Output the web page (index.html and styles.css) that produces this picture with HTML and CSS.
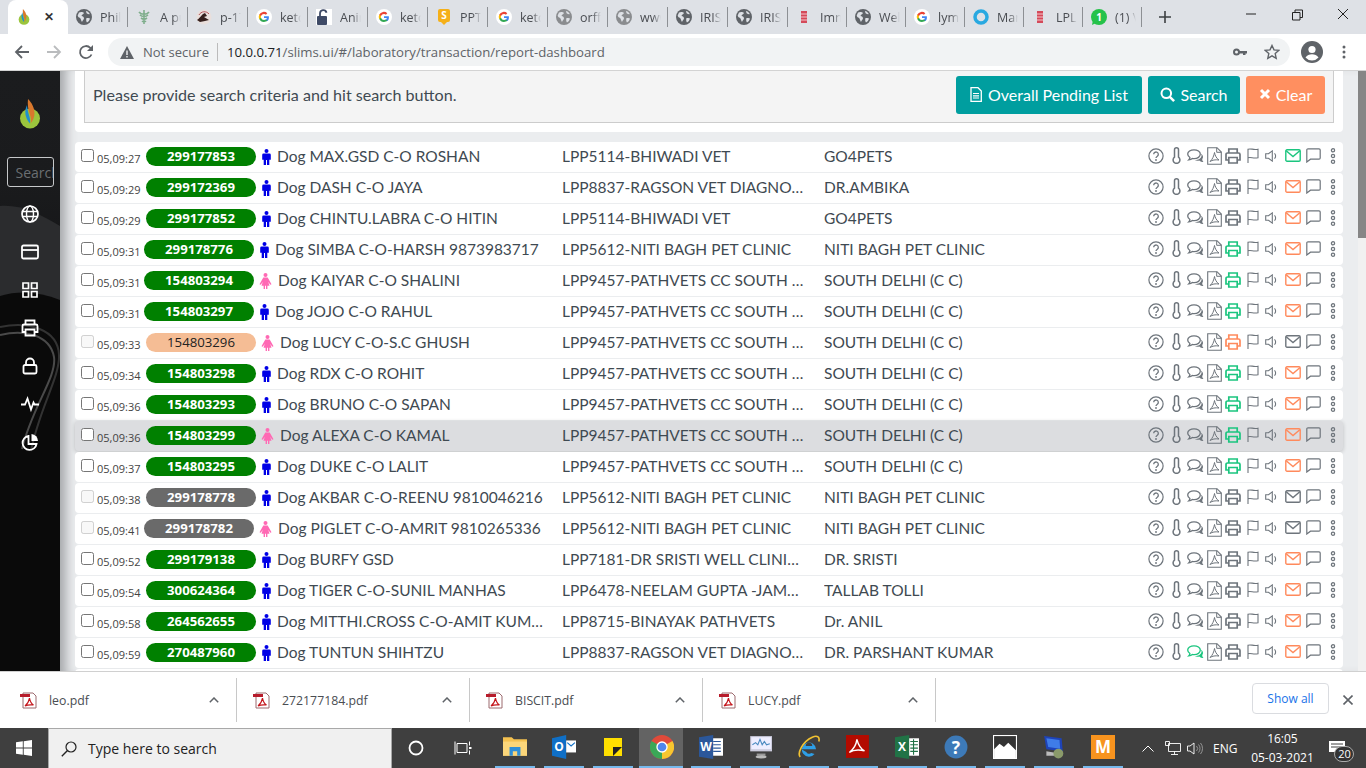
FILE: index.html
```html
<!DOCTYPE html>
<html lang="en">
<head>
<meta charset="utf-8">
<title>Report dashboard</title>
<link rel="stylesheet" href="styles.css">
</head>
<body>
<svg class="defs" aria-hidden="true">
  <symbol id="q" viewBox="0 0 16 16"><circle cx="8" cy="8" r="7.1" fill="none" stroke="currentColor" stroke-width="1.2"/><path d="M5.7 6.3a2.3 2.3 0 1 1 3.6 1.9c-.9.6-1.3 1-1.3 1.9" fill="none" stroke="currentColor" stroke-width="1.3"/><circle cx="8" cy="12" r=".9" fill="currentColor"/></symbol>
  <symbol id="t" viewBox="0 0 9 17"><path d="M2.5 10.2V2.8a2 2 0 0 1 4 0v7.4a3.4 3.4 0 1 1-4 0z" fill="none" stroke="currentColor" stroke-width="1.5"/></symbol>
  <symbol id="c" viewBox="0 0 17 14"><path d="M13.800 4.500c2.200 1.500 3 3.500 1.500 5.500-.2 1 .2 1.900 1.200 3-1.700 0-3-.5-4.200-1.500-1.700.4-3.200.2-4.500-.4 3.500 0 6.500-1.700 6.800-4.600z" fill="currentColor"/><path d="M7 .8C3.500.8.7 2.700.7 5.100c0 1.400.9 2.600 2.200 3.400-.1.900-.5 1.700-1.200 2.400 1.500-.1 2.800-.6 3.700-1.400.6.100 1.100.2 1.700.2 3.500 0 6.200-2 6.200-4.600S10.500.8 7 .8z" fill="none" stroke="currentColor" stroke-width="1.300"/></symbol>
  <symbol id="p" viewBox="0 0 15 18"><path d="M.7.700h9.300l4.300 4.300v12.300H.7z" fill="none" stroke="currentColor" stroke-width="1.100"/><path d="M9.700.700V5.300h4.600M7.500 5.500c-.5 3 -2 7-4.500 9 2.500-1.500 5-2 9-1.500-2.500-1.500-4-4.500-4.500-7.500z" fill="none" stroke="currentColor" stroke-width="1"/></symbol>
  <symbol id="pr" viewBox="0 0 16 16"><path d="M3.800 5V1h8.400v4M3.800 12H1V6.500A1.500 1.500 0 0 1 2.500 5h11A1.500 1.500 0 0 1 15 6.500V12h-2.800M3.800 9.500h8.400V15H3.800z" fill="none" stroke="currentColor" stroke-width="1.700"/></symbol>
  <symbol id="f" viewBox="0 0 12 15"><path d="M1 15V1.200c3.200-1 5 1 10 0v8.600c-5 1-6.800-1-10 0" fill="none" stroke="currentColor" stroke-width="1.100"/></symbol>
  <symbol id="v" viewBox="0 0 13 12"><path d="M.7 3.800h2.800L7.300.9v10.200L3.500 8.200H.7z" fill="none" stroke="currentColor" stroke-width="1.100"/><path d="M9.500 3.300a3.800 3.800 0 0 1 0 5.400" fill="none" stroke="currentColor" stroke-width="1.100"/></symbol>
  <symbol id="m" viewBox="0 0 16 13"><rect x=".8" y=".8" width="14.400" height="11.400" rx="1.200" fill="none" stroke="currentColor" stroke-width="1.400"/><path d="M1.200 1.800 8 7.500l6.800-5.700" fill="none" stroke="currentColor" stroke-width="1.400"/></symbol>
  <symbol id="ch" viewBox="0 0 15 15"><path d="M2 .8h11A1.200 1.200 0 0 1 14.200 2v8a1.200 1.200 0 0 1-1.200 1.200H4.500L.8 14V2A1.200 1.200 0 0 1 2 .8z" fill="none" stroke="currentColor" stroke-width="1.200"/></symbol>
  <symbol id="d" viewBox="0 0 6 16"><circle cx="3" cy="2.300" r="1.600" fill="none" stroke="currentColor" stroke-width="1.300"/><circle cx="3" cy="8" r="1.600" fill="none" stroke="currentColor" stroke-width="1.300"/><circle cx="3" cy="13.700" r="1.600" fill="none" stroke="currentColor" stroke-width="1.300"/></symbol>
  <symbol id="male" viewBox="0 0 11 16"><circle cx="5.500" cy="2" r="2"/><path d="M2.500 4.600h6a1.300 1.300 0 0 1 1.300 1.300v4.800H8.300V16H6V11H5v5H2.700v-5.300H1.200V5.900a1.300 1.300 0 0 1 1.300-1.300z"/></symbol>
  <symbol id="female" viewBox="0 0 13 16"><circle cx="6.500" cy="2" r="2"/><path d="M4.300 4.600h4.400l3.800 6.600-1.300.6-2-3 1.300 4H8.400V16H7v-3.200H6V16H4.600v-3.200H2.500l1.300-4-2 3-1.300-.6z"/></symbol>
  <symbol id="globe" viewBox="0 0 16 16"><circle cx="8" cy="8" r="8" fill="currentColor"/><path d="M3 3.500c2-1 4-.5 5 .5-1 1.500-2 1.500-2.500 3 1.500 0 2.500 1 2.500 2.500-.5 1.500-1.500 2-2 3.500-1-1.500-1-3-2-4-1-.5-2-1-2.300-2.500zM10 2c1.500 0 3 1.500 3.800 3-1 .5-2.800 0-3.300-1zM10.500 9c1 0 2.500 0 3.500.5-.5 2-1.500 3-3 4-1-1.500-1-3 -.5-4.500z" fill="#dee1e6"/></symbol>
  <symbol id="g" viewBox="0 0 16 16"><circle cx="8" cy="8" r="8" fill="#fff"/><path d="M12.900 8.200c0-.4 0-.7-.1-1H8v1.900h2.800a2.400 2.400 0 0 1-1 1.600v1.300h1.700c1-.9 1.400-2.200 1.400-3.800z" fill="#4285f4"/><path d="M8 13c1.400 0 2.500-.5 3.400-1.200l-1.600-1.300c-.5.300-1 .5-1.800.5a3.200 3.200 0 0 1-3-2.200H3.300v1.300A5 5 0 0 0 8 13z" fill="#34a853"/><path d="M5 8.800a3 3 0 0 1 0-1.900V5.600H3.300a5 5 0 0 0 0 4.500z" fill="#fbbc05"/><path d="M8 5a2.700 2.700 0 0 1 1.900.7l1.400-1.400A5 5 0 0 0 3.300 5.600L5 6.900A3.200 3.200 0 0 1 8 5z" fill="#ea4335"/></symbol>
  <symbol id="reddoc" viewBox="0 0 16 16"><path d="M5 2h6v12H5z" fill="#d44a5a"/><path d="M5 5h6M5 8h6M5 11h6" stroke="#f5c6cb" stroke-width="1"/></symbol>
  <symbol id="logo" viewBox="0 0 22 30"><circle cx="11" cy="19.500" r="10" fill="#9bc53d"/><path d="M9 0c4 4 6.500 9 6.500 14 0 4-1.500 8-4 10.500 .8-3 .6-6-.8-9.500C9.300 11 8.300 5 9 0z" fill="#d9782d"/><path d="M8 6c-2 4-2.300 9 -.5 13 .8 2 2 4 3.500 5.500 .5-3-.2-6-1.200-9C9 12.500 8.200 9 8 6z" fill="#1f8fcf"/></symbol>
  <symbol id="pdf" viewBox="0 0 17 17"><path d="M3 1h10l3 3v12H3z" fill="#fff" stroke="#9c6a6f"/><path d="M0 2h10v3H0z" fill="#b71c2b"/><path d="M9.500 6c-.5 3-2 6-4.500 8 2.500-1.200 5-1.500 8.500-1-2.500-1.500-3.500-4-4-7z" fill="none" stroke="#c4161c" stroke-width="1.200"/></symbol>
</svg>

<header class="tabstrip">
  <div class="tab active"><svg class="fav"><use href="#logo"/></svg><span class="close-tab">✕</span></div>
  <div class="tab"><div class="tab-in"><svg class="fav dim"><use href="#globe"/></svg><span class="ttl">Phil</span></div></div>
  <div class="tab"><div class="tab-in"><svg class="fav" viewBox="0 0 16 16"><path d="M8 1v14M3 3c2 3 8 3 10 0M4 6c2 2 6 2 8 0M5 9c2 1.500 4 1.500 6 0M6 12c1 1 3 1 4 0" fill="none" stroke="#7fae8c" stroke-width="1.600"/></svg><span class="ttl">A pu</span></div></div>
  <div class="tab"><div class="tab-in"><svg class="fav" viewBox="0 0 16 16"><circle cx="8" cy="8" r="7.500" fill="#e9dfdc"/><path d="M1 11c4-3 5-6 8-7l2 3-3 1 5 3-4 1-5 1z" fill="#35201d"/><path d="M3 6a6 6 0 0 1 10-1" fill="none" stroke="#b4555a" stroke-width="1"/></svg><span class="ttl">p-17</span></div></div>
  <div class="tab"><div class="tab-in"><svg class="fav"><use href="#g"/></svg><span class="ttl">keto</span></div></div>
  <div class="tab"><div class="tab-in"><svg class="fav" viewBox="0 0 16 16"><rect width="16" height="16" fill="#fff"/><rect x="1" y="7" width="10" height="9" rx="1" fill="#3e4a66"/><path d="M4 7V4.500a3.300 3.300 0 0 1 6.500-.8" fill="none" stroke="#3e4a66" stroke-width="1.800"/></svg><span class="ttl">Anin</span></div></div>
  <div class="tab"><div class="tab-in"><svg class="fav"><use href="#g"/></svg><span class="ttl">keto</span></div></div>
  <div class="tab"><div class="tab-in"><svg class="fav" viewBox="0 0 16 16"><rect x="2" width="12" height="13" rx="2" fill="#f5b019"/><path d="M5 13h6l-3 3z" fill="#f5b019"/><text x="8" y="10" class="fav-letter">S</text></svg><span class="ttl">PPT</span></div></div>
  <div class="tab"><div class="tab-in"><svg class="fav"><use href="#g"/></svg><span class="ttl">keto</span></div></div>
  <div class="tab"><div class="tab-in"><svg class="fav soft"><use href="#globe"/></svg><span class="ttl">orffa</span></div></div>
  <div class="tab"><div class="tab-in"><svg class="fav soft"><use href="#globe"/></svg><span class="ttl">www</span></div></div>
  <div class="tab"><div class="tab-in"><svg class="fav dim"><use href="#globe"/></svg><span class="ttl">IRIS</span></div></div>
  <div class="tab"><div class="tab-in"><svg class="fav dim"><use href="#globe"/></svg><span class="ttl">IRIS</span></div></div>
  <div class="tab slim"><div class="tab-in"><svg class="fav"><use href="#reddoc"/></svg><span class="ttl">Imn</span></div></div>
  <div class="tab slim"><div class="tab-in"><svg class="fav dim"><use href="#globe"/></svg><span class="ttl">Wel</span></div></div>
  <div class="tab slim"><div class="tab-in"><svg class="fav"><use href="#g"/></svg><span class="ttl">lym</span></div></div>
  <div class="tab slim"><div class="tab-in"><svg class="fav" viewBox="0 0 16 16"><circle cx="8" cy="8" r="6" fill="none" stroke="#29a9e1" stroke-width="3.500"/></svg><span class="ttl">Mar</span></div></div>
  <div class="tab slim"><div class="tab-in"><svg class="fav"><use href="#reddoc"/></svg><span class="ttl">LPL</span></div></div>
  <div class="tab slim"><div class="tab-in"><svg class="fav" viewBox="0 0 16 16"><circle cx="8" cy="8" r="8" fill="#25c24a"/><path d="M1 16l1-5 3 3z" fill="#25c24a"/><text x="8" y="12" class="fav-letter">1</text></svg><span class="ttl">(1) V</span></div></div>
  <svg class="plus" viewBox="0 0 12 12"><path d="M6 0v12M0 6h12" stroke="#3c4043" stroke-width="1.600"/></svg>
  <div class="winctl">
    <svg viewBox="0 0 46 28"><path d="M18 14h10" stroke="#222" stroke-width="1"/></svg>
    <svg viewBox="0 0 46 28"><path d="M18.500 12.500h7.500v7.500h-7.500zM21 12.500V10h7.500v7.500H26" fill="none" stroke="#222"/></svg>
    <svg viewBox="0 0 46 28"><path d="M18 9l10 10M28 9 18 19" stroke="#222" stroke-width="1"/></svg>
  </div>
</header>

<nav class="toolbar">
  <svg class="nav-ic" viewBox="0 0 16 16"><path d="M15 8H2M8 2 2 8l6 6" fill="none" stroke="#5f6368" stroke-width="1.800"/></svg>
  <svg class="nav-ic" viewBox="0 0 16 16"><path d="M1 8h13M8 2l6 6-6 6" fill="none" stroke="#babcbe" stroke-width="1.800"/></svg>
  <svg class="nav-ic" viewBox="0 0 16 16"><path d="M13.500 10.500A6 6 0 1 1 12.300 3.800L14.500 6" fill="none" stroke="#5f6368" stroke-width="1.800"/><path d="M15 1v6H9z" fill="#5f6368"/></svg>
  <div class="omni">
    <svg class="warn" viewBox="0 0 14 13"><path d="M7 0l7 13H0z" fill="#5f6368"/><path d="M6.300 4.500h1.400v4.500H6.300zM6.300 10h1.400v1.400H6.300z" fill="#f1f3f4"/></svg>
    <span class="notsec">Not secure</span>
    <span class="url"><b class="host">10.0.0.71</b>/slims.ui/#/laboratory/transaction/report-dashboard</span>
    <svg class="key" viewBox="0 0 14 8"><circle cx="3.500" cy="4" r="2.500" fill="none" stroke="#5f6368" stroke-width="2"/><path d="M6 3h8v2.500h-1.500V7H10V5.500H6z" fill="#5f6368"/></svg>
    <svg class="star" viewBox="0 0 16 16"><path d="M8 1.500l2 4.400 4.700.5-3.500 3.200 1 4.700L8 11.900l-4.200 2.400 1-4.700L1.300 6.400 6 5.900z" fill="none" stroke="#5f6368" stroke-width="1.400"/></svg>
  </div>
  <svg class="avatar" viewBox="0 0 22 22"><circle cx="11" cy="11" r="11" fill="#5f6368"/><circle cx="11" cy="8.500" r="3.600" fill="#fff"/><path d="M4.500 16.500c1.500-2.500 4-3.300 6.500-3.300s5 .8 6.500 3.300a8.500 8.500 0 0 1-13 0z" fill="#fff"/></svg>
  <svg class="menu" viewBox="0 0 4 14"><circle cx="2" cy="2" r="1.500" fill="#5f6368"/><circle cx="2" cy="7" r="1.500" fill="#5f6368"/><circle cx="2" cy="12" r="1.500" fill="#5f6368"/></svg>
</nav>

<div class="page">
  <aside class="sidebar">
    <svg class="sidebg" viewBox="0 0 60 600" preserveAspectRatio="none" aria-hidden="true">
      <path d="M0 135c20-2 40 8 60 20v100H0z" fill="#2b2c2e"/>
      <path d="M0 225c20-6 40-4 60 4v371H0z" fill="#0a0a0a"/>
      <path d="M0 264c25-6 50 0 54 22 3 20-22 50-32 92" fill="none" stroke="#4a4a4a" stroke-width="2"/>
      <path d="M0 256c28-6 58 2 59 28 1 22-20 54-28 96" fill="none" stroke="#333" stroke-width="2"/>
    </svg>
    <svg class="brand"><use href="#logo"/></svg>
    <input class="side-search" type="text" placeholder="Search">
    <svg class="side-ic" viewBox="0 0 18 18"><circle cx="9" cy="9" r="8" fill="none" stroke="#fff" stroke-width="1.700"/><ellipse cx="9" cy="9" rx="3.500" ry="8" fill="none" stroke="#fff" stroke-width="1.400"/><path d="M1 6.500h16M1 11.500h16" stroke="#fff" stroke-width="1.400"/></svg>
    <svg class="side-ic" viewBox="0 0 18 18"><rect x="1" y="2.500" width="16" height="13" rx="1.500" fill="none" stroke="#fff" stroke-width="1.800"/><path d="M1 7h16" stroke="#fff" stroke-width="1.800"/></svg>
    <svg class="side-ic" viewBox="0 0 18 18"><path d="M2 2h5.500v5.500H2zM10.500 2H16v5.500h-5.500zM2 10.500h5.500V16H2zM10.500 10.500H16V16h-5.500z" fill="none" stroke="#fff" stroke-width="1.700"/></svg>
    <svg class="side-ic" viewBox="0 0 18 18"><path d="M4.500 5.500V1.500h9v4M4.500 13H1.500V7A1.500 1.500 0 0 1 3 5.500h12A1.500 1.500 0 0 1 16.500 7v6h-3M4.500 10.500h9V16.500h-9z" fill="none" stroke="#fff" stroke-width="1.800"/></svg>
    <svg class="side-ic" viewBox="0 0 18 18"><rect x="2.500" y="8" width="13" height="8.500" rx="1.500" fill="none" stroke="#fff" stroke-width="1.800"/><path d="M5 8V5.500a4 4 0 0 1 8 0V8" fill="none" stroke="#fff" stroke-width="1.800"/></svg>
    <svg class="side-ic" viewBox="0 0 18 18"><path d="M0 9.500h4l2.500-6 3.500 11 2.500-7 1 2H18" fill="none" stroke="#fff" stroke-width="1.800"/></svg>
    <svg class="side-ic" viewBox="0 0 18 18"><path d="M7.500 3a7 7 0 1 0 8 8H7.500z" fill="none" stroke="#fff" stroke-width="1.800"/><path d="M10.500 1a7 7 0 0 1 6.500 7h-6.500z" fill="#fff"/></svg>
  </aside>

  <main class="main">
    <section class="card">
      <div class="panel">
        <span class="hint">Please provide search criteria and hit search button.</span>
        <div class="btns">
          <button class="btn teal wide"><svg class="btn-ic" viewBox="0 0 12 15"><path d="M1 .7h7l3.300 3.300v10.300H1z" fill="none" stroke="#fff" stroke-width="1.300"/><path d="M3 6.500h6M3 8.800h6M3 11h6" stroke="#fff" stroke-width="1.200"/></svg>Overall Pending List</button>
          <button class="btn teal mid"><svg class="btn-ic s" viewBox="0 0 15 15"><circle cx="6.300" cy="6.300" r="4.800" fill="none" stroke="#fff" stroke-width="2"/><path d="M9.800 9.800l4.300 4.300" stroke="#fff" stroke-width="2.500"/></svg>Search</button>
          <button class="btn coral"><svg class="btn-ic x" viewBox="0 0 12 12"><path d="M2 2l8 8M10 2l-8 8" stroke="#fff" stroke-width="3"/></svg>Clear</button>
        </div>
      </div>
    </section>

    <div class="rows">
      <div class="row"><div class="lead"><input type="checkbox"><span class="time">05,09:27</span><span class="pill">299177853</span><svg class="gen m"><use href="#male"/></svg><span class="name">Dog MAX.GSD C-O ROSHAN</span></div><span class="client">LPP5114-BHIWADI VET</span><span class="doc">GO4PETS</span><div class="acts"><svg class="a1"><use href="#q"/></svg><svg class="a2"><use href="#t"/></svg><svg class="a3"><use href="#c"/></svg><svg class="a4"><use href="#p"/></svg><svg class="a5"><use href="#pr"/></svg><svg class="a6"><use href="#f"/></svg><svg class="a7"><use href="#v"/></svg><svg class="a8 ok"><use href="#m"/></svg><svg class="a9"><use href="#ch"/></svg><svg class="a0"><use href="#d"/></svg></div></div>
      <div class="row"><div class="lead"><input type="checkbox"><span class="time">05,09:29</span><span class="pill">299172369</span><svg class="gen m"><use href="#male"/></svg><span class="name">Dog DASH C-O JAYA</span></div><span class="client">LPP8837-RAGSON VET DIAGNOSTIC</span><span class="doc">DR.AMBIKA</span><div class="acts"><svg class="a1"><use href="#q"/></svg><svg class="a2"><use href="#t"/></svg><svg class="a3"><use href="#c"/></svg><svg class="a4"><use href="#p"/></svg><svg class="a5"><use href="#pr"/></svg><svg class="a6"><use href="#f"/></svg><svg class="a7"><use href="#v"/></svg><svg class="a8 warnc"><use href="#m"/></svg><svg class="a9"><use href="#ch"/></svg><svg class="a0"><use href="#d"/></svg></div></div>
      <div class="row"><div class="lead"><input type="checkbox"><span class="time">05,09:29</span><span class="pill">299177852</span><svg class="gen m"><use href="#male"/></svg><span class="name">Dog CHINTU.LABRA C-O HITIN</span></div><span class="client">LPP5114-BHIWADI VET</span><span class="doc">GO4PETS</span><div class="acts"><svg class="a1"><use href="#q"/></svg><svg class="a2"><use href="#t"/></svg><svg class="a3"><use href="#c"/></svg><svg class="a4"><use href="#p"/></svg><svg class="a5"><use href="#pr"/></svg><svg class="a6"><use href="#f"/></svg><svg class="a7"><use href="#v"/></svg><svg class="a8 warnc"><use href="#m"/></svg><svg class="a9"><use href="#ch"/></svg><svg class="a0"><use href="#d"/></svg></div></div>
      <div class="row"><div class="lead"><input type="checkbox"><span class="time nar">05,09:31</span><span class="pill">299178776</span><svg class="gen m"><use href="#male"/></svg><span class="name">Dog SIMBA C-O-HARSH 9873983717</span></div><span class="client">LPP5612-NITI BAGH PET CLINIC</span><span class="doc">NITI BAGH PET CLINIC</span><div class="acts"><svg class="a1"><use href="#q"/></svg><svg class="a2"><use href="#t"/></svg><svg class="a3"><use href="#c"/></svg><svg class="a4"><use href="#p"/></svg><svg class="a5 ok"><use href="#pr"/></svg><svg class="a6"><use href="#f"/></svg><svg class="a7"><use href="#v"/></svg><svg class="a8 warnc"><use href="#m"/></svg><svg class="a9"><use href="#ch"/></svg><svg class="a0"><use href="#d"/></svg></div></div>
      <div class="row"><div class="lead"><input type="checkbox"><span class="time nar">05,09:31</span><span class="pill">154803294</span><svg class="gen f"><use href="#female"/></svg><span class="name">Dog KAIYAR C-O SHALINI</span></div><span class="client">LPP9457-PATHVETS CC SOUTH DELHI</span><span class="doc">SOUTH DELHI (C C)</span><div class="acts"><svg class="a1"><use href="#q"/></svg><svg class="a2"><use href="#t"/></svg><svg class="a3"><use href="#c"/></svg><svg class="a4"><use href="#p"/></svg><svg class="a5 ok"><use href="#pr"/></svg><svg class="a6"><use href="#f"/></svg><svg class="a7"><use href="#v"/></svg><svg class="a8 warnc"><use href="#m"/></svg><svg class="a9"><use href="#ch"/></svg><svg class="a0"><use href="#d"/></svg></div></div>
      <div class="row"><div class="lead"><input type="checkbox"><span class="time nar">05,09:31</span><span class="pill">154803297</span><svg class="gen m"><use href="#male"/></svg><span class="name">Dog JOJO C-O RAHUL</span></div><span class="client">LPP9457-PATHVETS CC SOUTH DELHI</span><span class="doc">SOUTH DELHI (C C)</span><div class="acts"><svg class="a1"><use href="#q"/></svg><svg class="a2"><use href="#t"/></svg><svg class="a3"><use href="#c"/></svg><svg class="a4"><use href="#p"/></svg><svg class="a5 ok"><use href="#pr"/></svg><svg class="a6"><use href="#f"/></svg><svg class="a7"><use href="#v"/></svg><svg class="a8 warnc"><use href="#m"/></svg><svg class="a9"><use href="#ch"/></svg><svg class="a0"><use href="#d"/></svg></div></div>
      <div class="row"><div class="lead"><input type="checkbox" disabled><span class="time">05,09:33</span><span class="pill peach">154803296</span><svg class="gen f"><use href="#female"/></svg><span class="name">Dog LUCY C-O-S.C GHUSH</span></div><span class="client">LPP9457-PATHVETS CC SOUTH DELHI</span><span class="doc">SOUTH DELHI (C C)</span><div class="acts"><svg class="a1"><use href="#q"/></svg><svg class="a2"><use href="#t"/></svg><svg class="a3"><use href="#c"/></svg><svg class="a4"><use href="#p"/></svg><svg class="a5 warnc"><use href="#pr"/></svg><svg class="a6"><use href="#f"/></svg><svg class="a7"><use href="#v"/></svg><svg class="a8"><use href="#m"/></svg><svg class="a9"><use href="#ch"/></svg><svg class="a0"><use href="#d"/></svg></div></div>
      <div class="row"><div class="lead"><input type="checkbox"><span class="time">05,09:34</span><span class="pill">154803298</span><svg class="gen m"><use href="#male"/></svg><span class="name">Dog RDX C-O ROHIT</span></div><span class="client">LPP9457-PATHVETS CC SOUTH DELHI</span><span class="doc">SOUTH DELHI (C C)</span><div class="acts"><svg class="a1"><use href="#q"/></svg><svg class="a2"><use href="#t"/></svg><svg class="a3"><use href="#c"/></svg><svg class="a4"><use href="#p"/></svg><svg class="a5 ok"><use href="#pr"/></svg><svg class="a6"><use href="#f"/></svg><svg class="a7"><use href="#v"/></svg><svg class="a8 warnc"><use href="#m"/></svg><svg class="a9"><use href="#ch"/></svg><svg class="a0"><use href="#d"/></svg></div></div>
      <div class="row"><div class="lead"><input type="checkbox"><span class="time">05,09:36</span><span class="pill">154803293</span><svg class="gen m"><use href="#male"/></svg><span class="name">Dog BRUNO C-O SAPAN</span></div><span class="client">LPP9457-PATHVETS CC SOUTH DELHI</span><span class="doc">SOUTH DELHI (C C)</span><div class="acts"><svg class="a1"><use href="#q"/></svg><svg class="a2"><use href="#t"/></svg><svg class="a3"><use href="#c"/></svg><svg class="a4"><use href="#p"/></svg><svg class="a5 ok"><use href="#pr"/></svg><svg class="a6"><use href="#f"/></svg><svg class="a7"><use href="#v"/></svg><svg class="a8 warnc"><use href="#m"/></svg><svg class="a9"><use href="#ch"/></svg><svg class="a0"><use href="#d"/></svg></div></div>
      <div class="row hover"><div class="lead"><input type="checkbox"><span class="time">05,09:36</span><span class="pill">154803299</span><svg class="gen f"><use href="#female"/></svg><span class="name">Dog ALEXA C-O KAMAL</span></div><span class="client">LPP9457-PATHVETS CC SOUTH DELHI</span><span class="doc">SOUTH DELHI (C C)</span><div class="acts"><svg class="a1"><use href="#q"/></svg><svg class="a2"><use href="#t"/></svg><svg class="a3"><use href="#c"/></svg><svg class="a4"><use href="#p"/></svg><svg class="a5 ok"><use href="#pr"/></svg><svg class="a6"><use href="#f"/></svg><svg class="a7"><use href="#v"/></svg><svg class="a8 warnc"><use href="#m"/></svg><svg class="a9"><use href="#ch"/></svg><svg class="a0"><use href="#d"/></svg></div></div>
      <div class="row"><div class="lead"><input type="checkbox"><span class="time">05,09:37</span><span class="pill">154803295</span><svg class="gen m"><use href="#male"/></svg><span class="name">Dog DUKE C-O LALIT</span></div><span class="client">LPP9457-PATHVETS CC SOUTH DELHI</span><span class="doc">SOUTH DELHI (C C)</span><div class="acts"><svg class="a1"><use href="#q"/></svg><svg class="a2"><use href="#t"/></svg><svg class="a3"><use href="#c"/></svg><svg class="a4"><use href="#p"/></svg><svg class="a5 ok"><use href="#pr"/></svg><svg class="a6"><use href="#f"/></svg><svg class="a7"><use href="#v"/></svg><svg class="a8 warnc"><use href="#m"/></svg><svg class="a9"><use href="#ch"/></svg><svg class="a0"><use href="#d"/></svg></div></div>
      <div class="row"><div class="lead"><input type="checkbox" disabled><span class="time">05,09:38</span><span class="pill gray">299178778</span><svg class="gen m"><use href="#male"/></svg><span class="name">Dog AKBAR C-O-REENU 9810046216</span></div><span class="client">LPP5612-NITI BAGH PET CLINIC</span><span class="doc">NITI BAGH PET CLINIC</span><div class="acts"><svg class="a1"><use href="#q"/></svg><svg class="a2"><use href="#t"/></svg><svg class="a3"><use href="#c"/></svg><svg class="a4"><use href="#p"/></svg><svg class="a5"><use href="#pr"/></svg><svg class="a6"><use href="#f"/></svg><svg class="a7"><use href="#v"/></svg><svg class="a8"><use href="#m"/></svg><svg class="a9"><use href="#ch"/></svg><svg class="a0"><use href="#d"/></svg></div></div>
      <div class="row"><div class="lead"><input type="checkbox" disabled><span class="time nar">05,09:41</span><span class="pill gray">299178782</span><svg class="gen f"><use href="#female"/></svg><span class="name">Dog PIGLET C-O-AMRIT 9810265336</span></div><span class="client">LPP5612-NITI BAGH PET CLINIC</span><span class="doc">NITI BAGH PET CLINIC</span><div class="acts"><svg class="a1"><use href="#q"/></svg><svg class="a2"><use href="#t"/></svg><svg class="a3"><use href="#c"/></svg><svg class="a4"><use href="#p"/></svg><svg class="a5"><use href="#pr"/></svg><svg class="a6"><use href="#f"/></svg><svg class="a7"><use href="#v"/></svg><svg class="a8"><use href="#m"/></svg><svg class="a9"><use href="#ch"/></svg><svg class="a0"><use href="#d"/></svg></div></div>
      <div class="row"><div class="lead"><input type="checkbox"><span class="time">05,09:52</span><span class="pill">299179138</span><svg class="gen m"><use href="#male"/></svg><span class="name">Dog BURFY GSD</span></div><span class="client">LPP7181-DR SRISTI WELL CLINIC AND LAB</span><span class="doc">DR. SRISTI</span><div class="acts"><svg class="a1"><use href="#q"/></svg><svg class="a2"><use href="#t"/></svg><svg class="a3"><use href="#c"/></svg><svg class="a4"><use href="#p"/></svg><svg class="a5"><use href="#pr"/></svg><svg class="a6"><use href="#f"/></svg><svg class="a7"><use href="#v"/></svg><svg class="a8 warnc"><use href="#m"/></svg><svg class="a9"><use href="#ch"/></svg><svg class="a0"><use href="#d"/></svg></div></div>
      <div class="row"><div class="lead"><input type="checkbox"><span class="time">05,09:54</span><span class="pill">300624364</span><svg class="gen m"><use href="#male"/></svg><span class="name">Dog TIGER C-O-SUNIL MANHAS</span></div><span class="client">LPP6478-NEELAM GUPTA -JAMMU</span><span class="doc">TALLAB TOLLI</span><div class="acts"><svg class="a1"><use href="#q"/></svg><svg class="a2"><use href="#t"/></svg><svg class="a3"><use href="#c"/></svg><svg class="a4"><use href="#p"/></svg><svg class="a5"><use href="#pr"/></svg><svg class="a6"><use href="#f"/></svg><svg class="a7"><use href="#v"/></svg><svg class="a8 warnc"><use href="#m"/></svg><svg class="a9"><use href="#ch"/></svg><svg class="a0"><use href="#d"/></svg></div></div>
      <div class="row"><div class="lead"><input type="checkbox"><span class="time">05,09:58</span><span class="pill">264562655</span><svg class="gen m"><use href="#male"/></svg><span class="name">Dog MITTHI.CROSS C-O-AMIT KUMAR SINGH</span></div><span class="client">LPP8715-BINAYAK PATHVETS</span><span class="doc">Dr. ANIL</span><div class="acts"><svg class="a1"><use href="#q"/></svg><svg class="a2"><use href="#t"/></svg><svg class="a3"><use href="#c"/></svg><svg class="a4"><use href="#p"/></svg><svg class="a5"><use href="#pr"/></svg><svg class="a6"><use href="#f"/></svg><svg class="a7"><use href="#v"/></svg><svg class="a8 warnc"><use href="#m"/></svg><svg class="a9"><use href="#ch"/></svg><svg class="a0"><use href="#d"/></svg></div></div>
      <div class="row"><div class="lead"><input type="checkbox"><span class="time">05,09:59</span><span class="pill">270487960</span><svg class="gen m"><use href="#male"/></svg><span class="name">Dog TUNTUN SHIHTZU</span></div><span class="client">LPP8837-RAGSON VET DIAGNOSTIC</span><span class="doc">DR. PARSHANT KUMAR</span><div class="acts"><svg class="a1"><use href="#q"/></svg><svg class="a2"><use href="#t"/></svg><svg class="a3 ok"><use href="#c"/></svg><svg class="a4"><use href="#p"/></svg><svg class="a5"><use href="#pr"/></svg><svg class="a6"><use href="#f"/></svg><svg class="a7"><use href="#v"/></svg><svg class="a8 warnc"><use href="#m"/></svg><svg class="a9"><use href="#ch"/></svg><svg class="a0"><use href="#d"/></svg></div></div>
      <div class="row"></div>
    </div>
  </main>
  <div class="scrollbar"><div class="thumb"></div></div>
</div>

<footer class="downloads">
  <div class="dl"><svg class="pdf"><use href="#pdf"/></svg><span class="dl-name">leo.pdf</span><svg class="chev" viewBox="0 0 10 6"><path d="M.8 5.200 5 1l4.200 4.200" fill="none" stroke="#5f6368" stroke-width="1.500"/></svg></div>
  <div class="dl"><svg class="pdf"><use href="#pdf"/></svg><span class="dl-name">272177184.pdf</span><svg class="chev" viewBox="0 0 10 6"><path d="M.8 5.200 5 1l4.200 4.200" fill="none" stroke="#5f6368" stroke-width="1.500"/></svg></div>
  <div class="dl"><svg class="pdf"><use href="#pdf"/></svg><span class="dl-name">BISCIT.pdf</span><svg class="chev" viewBox="0 0 10 6"><path d="M.8 5.200 5 1l4.200 4.200" fill="none" stroke="#5f6368" stroke-width="1.500"/></svg></div>
  <div class="dl"><svg class="pdf"><use href="#pdf"/></svg><span class="dl-name">LUCY.pdf</span><svg class="chev" viewBox="0 0 10 6"><path d="M.8 5.200 5 1l4.200 4.200" fill="none" stroke="#5f6368" stroke-width="1.500"/></svg></div>
  <button class="showall">Show all</button>
  <svg class="dl-x" viewBox="0 0 10 10"><path d="M.5.500l9 9M9.500.500l-9 9" stroke="#5f6368" stroke-width="1.600"/></svg>
</footer>

<div class="taskbar">
  <svg class="win" viewBox="0 0 16 16"><path d="M0 2.300 6.800 1.300V7.600H0zM7.700 1.200 16 0v7.600H7.700zM0 8.400h6.800v6.300L0 13.700zM7.700 8.400H16V16l-8.300-1.200z" fill="#fff"/></svg>
  <div class="tsearch"><svg class="lens" viewBox="0 0 16 16"><circle cx="10" cy="6" r="5" fill="none" stroke="#222" stroke-width="1.200"/><path d="M6.500 9.500.8 15.200" stroke="#222" stroke-width="1.400"/></svg><span>Type here to search</span></div>
  <svg class="cortana" viewBox="0 0 16 16"><circle cx="8" cy="8" r="6.500" fill="none" stroke="#fff" stroke-width="1.800"/></svg>
  <svg class="taskview" viewBox="0 0 18 14"><path d="M3 2.500h10v9H3zM1 .5v13M15.500 .5v4M15.500 9.500v4" fill="none" stroke="#fff"/><path d="M15 6h2.500v2H15z" fill="#fff"/></svg>
  <div class="apps">
    <div class="app on"><svg viewBox="0 0 22 20"><path d="M0 1h8l2 2h12v15H0z" fill="#f4c150"/><path d="M0 5h22v13H0z" fill="#fbd67a"/><path d="M6 10h10v8h-3v-4H9v4H6z" fill="#2f8fd8"/></svg></div>
    <div class="app on"><svg viewBox="0 0 22 22"><path d="M0 3 13 0v22L0 19z" fill="#0f6fc6"/><text x="6.500" y="15" class="app-letter">O</text><path d="M13 5h9v11h-9z" fill="#fff"/><path d="M14 7l3.500 3L21 7" fill="none" stroke="#0f6fc6"/></svg></div>
    <div class="app on"><svg class="sticky" viewBox="0 0 18 18"><path d="M0 0h18v18H0z" fill="#ffdf00"/><path d="M9 18l9-9H9z" fill="#222"/></svg></div>
    <div class="app on active"><svg viewBox="0 0 22 22"><circle cx="11" cy="11" r="11" fill="#e04a3a"/><path d="M11 11 20.600 5.500A11 11 0 0 1 11 22z" fill="#f7c62f"/><path d="M11 11 11 22A11 11 0 0 1 1.400 5.500z" fill="#3aa757"/><circle cx="11" cy="11" r="5.200" fill="#fff"/><circle cx="11" cy="11" r="4" fill="#4f86ec"/></svg></div>
    <div class="app on"><svg viewBox="0 0 22 22"><path d="M9 3h13v16H9z" fill="#fff"/><path d="M13 6h7M13 9h7M13 12h7M13 15h7" stroke="#2b579a"/><path d="M0 2 13 0v22L0 20z" fill="#2b579a"/><text x="6.500" y="15" class="app-letter">W</text></svg></div>
    <div class="app on"><svg viewBox="0 0 22 22"><path d="M2 1h20v14H2z" fill="#ccd"/><path d="M3 2h18v11H3z" fill="#eef"/><path d="M4 9l3-2 2 2 2-5 2 5 2-3 2 3 3-1" fill="none" stroke="#4a8ac0"/><path d="M8 17h8v2H8z" fill="#999"/><ellipse cx="12" cy="20" rx="5" ry="1.500" fill="#bbb"/></svg></div>
    <div class="app on"><svg viewBox="0 0 22 22"><path d="M4 13h13.500a6.500 6.500 0 1 0-1.400 4.500l-3-1a3 3 0 0 1-4.600-1M8 10a3 3 0 0 1 6 0z" fill="#2e9fe6" fill-rule="evenodd"/><path d="M3 20C0 17 5 6 14 2c5-2 7 0 6 4" fill="none" stroke="#f1c232" stroke-width="1.500"/></svg></div>
    <div class="app on"><svg viewBox="0 0 22 22"><rect width="21" height="21" fill="#b30b00"/><path d="M10 4c-.5 4-3 9-7 12 3-2 8-3 14-1.500C13 12.500 11 8 10 4z" fill="none" stroke="#fff" stroke-width="1.300"/></svg></div>
    <div class="app on"><svg viewBox="0 0 22 22"><path d="M9 3h13v16H9z" fill="#fff"/><path d="M14 6h7M14 9h7M14 12h7M14 15h7M17 4v14" stroke="#217346"/><path d="M0 2 13 0v22L0 20z" fill="#217346"/><text x="6.500" y="15" class="app-letter">X</text></svg></div>
    <div class="app on"><svg viewBox="0 0 22 22"><circle cx="11" cy="11" r="10.500" fill="#3d7ab8"/><text x="11" y="17" class="help-q">?</text></svg></div>
    <div class="app on"><svg viewBox="0 0 22 22"><rect x=".5" y=".5" width="21" height="21" fill="#333" stroke="#fff"/><path d="M1 21V13l5-5 4 3 4-4 7 7v7z" fill="#fff"/></svg></div>
    <div class="app on"><svg viewBox="0 0 22 22"><path d="M2 1l16 2 1 12-15-2z" fill="#1e43b8"/><path d="M4 3l12 1.500.7 8-11-1.500z" fill="#3f7ce8"/><path d="M4 15l12 2v2H4z" fill="#bbb"/><circle cx="15" cy="17" r="4.500" fill="#8a9a6a"/></svg></div>
    <div class="app on"><svg viewBox="0 0 24 24"><rect width="24" height="24" fill="#f7931e"/><text x="12" y="18" class="m-letter">M</text></svg></div>
  </div>
  <div class="tray">
    <svg class="tr-up" viewBox="0 0 12 7"><path d="M.5 6.500 6 1l5.500 5.500" fill="none" stroke="#fff" stroke-width="1"/></svg>
    <svg class="tr-net" viewBox="0 0 16 14"><path d="M3.500 2.500h12v8h-12zM9.500 10.500v3M6 13.500h7M.5.500h4v4h-4z" fill="#3f3f3f" stroke="#fff" stroke-width=".9"/></svg>
    <svg class="tr-vol" viewBox="0 0 16 13"><path d="M.5 4h2.500L7 1v11L3 9H.5z" fill="none" stroke="#fff" stroke-width=".9"/><path d="M9.500 4a3.500 3.500 0 0 1 0 5M11.500 2.500a6 6 0 0 1 0 8M13.500 1a8.500 8.500 0 0 1 0 11" fill="none" stroke="#aaa" stroke-width=".8"/></svg>
    <span class="eng">ENG</span>
    <div class="clock"><span>16:05</span><span>05-03-2021</span></div>
    <div class="notif"><svg viewBox="0 0 16 13"><path d="M0 0h16v11H0z" fill="#fff"/><path d="M2 3h12M2 6h12" stroke="#3f3f3f"/></svg><span class="badge">20</span></div>
  </div>
</div>
</body>
</html>
```

FILE: styles.css
```css
* { box-sizing: border-box; }
html, body { margin: 0; padding: 0; }
body {
  width: 1366px; height: 768px; overflow: hidden;
  display: flex; flex-direction: column;
  font-family: "Open Sans", "Liberation Sans", sans-serif;
  color: #3f4a52; background: #fff;
}
.defs { width: 0; height: 0; position: absolute; }
svg { display: block; flex: none; }

/* tab strip */
.tabstrip { height: 34px; background: #dee1e6; display: flex; align-items: center; padding-left: 8px; flex: none; }
.tab { width: 60px; height: 34px; display: flex; align-items: center; flex: none; }
.tab.slim { width: 59px; }
.tab-in { display: flex; align-items: center; width: 100%; height: 20px; padding-left: 8px; border-right: 1px solid #8d9094; overflow: hidden; }
.tab.active { background: #fff; border-radius: 8px 8px 0 0; padding-left: 10px; }
.tab.active .fav { width: 12px; height: 16px; }
.close-tab { margin-left: 14px; font-size: 12px; font-weight: 700; color: #333; line-height: 1; }
.fav { width: 16px; height: 16px; color: #5f6368; }
.fav.soft { color: #8a8c8f; }
.fav-letter { font: 700 10px "Open Sans", sans-serif; fill: #fff; text-anchor: middle; }
.ttl {
  margin-left: 8px; width: 21px; overflow: hidden; white-space: nowrap;
  font-size: 12.5px; color: #4a4d52;
  -webkit-mask-image: linear-gradient(90deg, #000 60%, transparent);
  mask-image: linear-gradient(90deg, #000 60%, transparent);
}
.plus { width: 12px; height: 12px; margin-left: 17px; }
.winctl { display: flex; margin-left: auto; align-self: flex-start; }
.winctl svg { width: 46px; height: 28px; }

/* toolbar */
.toolbar { height: 37px; flex: none; display: flex; align-items: center; padding: 1px 0 1px 14px; border-bottom: 1px solid #d3d3d3; background: #fff; }
.nav-ic { width: 16px; height: 16px; margin-right: 16px; }
.omni { width: 1182px; height: 28px; margin-left: -2px; background: #f1f3f4; border-radius: 14px; display: flex; align-items: center; padding-left: 12px; }
.warn { width: 14px; height: 13px; }
.notsec { font-size: 13px; color: #5f6368; margin-left: 9px; padding-right: 8px; border-right: 1px solid #bbb; line-height: 18px; }
.url { font-size: 13.200px; color: #5f6368; margin-left: 9px; white-space: nowrap; }
.host { font-weight: 400; color: #202124; }
.key { width: 14px; height: 8px; margin-left: auto; }
.star { width: 16px; height: 16px; margin: 0 10px 0 17px; }
.avatar { width: 22px; height: 22px; margin-left: 11px; }
.menu { width: 4px; height: 14px; margin-left: 19px; }

/* page */
.page { height: 600px; flex: none; display: flex; overflow: hidden; }
.sidebar {
  width: 60px; flex: none; position: relative; overflow: hidden;
  display: flex; flex-direction: column; align-items: center;
  background: linear-gradient(#1b1c1e 0, #1a1b1d 110px, #000 560px);
}
.sidebg { position: absolute; left: 0; top: 0; width: 60px; height: 600px; }
.brand { width: 22px; height: 30px; margin-top: 28px; position: relative; }
.side-search {
  position: relative; width: 47px; height: 30px; margin-top: 28px; padding: 0 0 0 8px;
  background: transparent; border: 1px solid #c6c8ca; border-radius: 3px;
  font: 14px "Open Sans", sans-serif; color: #aaa;
}
.side-search::placeholder { color: #6b6f72; opacity: 1; }
.side-ic { width: 18px; height: 18px; margin-top: 20px; position: relative; }
.side-search + .side-ic { margin-top: 18px; }

.main {
  width: 1298px; flex: none; padding: 0 15px; overflow: hidden;
  background: #ebedef;
  box-shadow: inset 13px 0 11px -7px #a5a7aa;
}
.card { height: 61px; background: #fff; border-radius: 0 0 4px 4px; padding: 0 9px; margin-bottom: 10px; }
.panel {
  height: 52px; background: #f4f4f4; border: 1px solid #ccc; border-top: 0;
  display: flex; padding: 5px 8px 0 8px; justify-content: space-between;
}
.hint { font: 16.100px/37px "Lato", sans-serif; color: #3f4a52; }
.btns { display: flex; gap: 6px; }
.btn {
  height: 38px; border: 0; border-radius: 3px; color: #fff; display: flex; align-items: center; justify-content: center;
  font: 16px "Lato", sans-serif; padding: 0 0 2px;
}
.btn.teal { background: #009e9f; }
.btn.coral { background: #ff8f60; width: 79px; }
.btn.wide { width: 186px; }
.btn.mid { width: 92px; }
.btn-ic { width: 12px; height: 15px; margin-right: 6px; }
.btn-ic.s { width: 15px; height: 15px; margin-right: 5px; }
.btn-ic.x { width: 12px; height: 12px; margin-right: 5px; }

/* rows */
.rows { display: flex; flex-direction: column; gap: 1px; }
.row {
  height: 30px; flex: none; background: #fff; border-radius: 4px; padding-left: 6px;
  display: flex; align-items: center; font: 15.500px "Lato", sans-serif; color: #3f4a52;
}
.row.hover { background: #dcdde0; box-shadow: 0 1px 4px rgba(0, 0, 0, .2); }
.lead { width: 481px; flex: none; display: flex; align-items: center; }
.lead input { width: 13px; height: 13px; margin: 0 0 3px; flex: none; }
.time { width: 52px; padding: 3px 0 0 3px; font: 11px "Open Sans", sans-serif; color: #444; white-space: nowrap; flex: none; }
.time.nar { width: 50px; }
.pill {
  width: 110px; height: 19px; margin-bottom: 1px; flex: none; border-radius: 10px; background: #008000; color: #fff;
  font: 700 13.200px/19px "Open Sans", sans-serif; text-align: center;
}
.pill.peach { background: #f5bd95; color: #222; font-weight: 400; }
.pill.gray { background: #6a6a6a; }
.gen { width: 11px; height: 16px; margin: 0 5px 0 5px; flex: none; }
.gen.m { fill: #0000e6; }
.gen.f { width: 13px; margin-right: 6px; fill: #ff69b4; }
.name { flex: 1; min-width: 0; padding: 0 17px 2px 0; white-space: nowrap; overflow: hidden; text-overflow: ellipsis; }
.client { width: 262px; flex: none; padding: 0 17px 2px 0; white-space: nowrap; overflow: hidden; text-overflow: ellipsis; }
.doc { flex: 1; min-width: 0; padding-bottom: 2px; white-space: nowrap; overflow: hidden; }
.acts {
  flex: none; display: grid; margin: 0 6px 3px 0; align-items: center; color: #6e757c;
  grid-template-columns: 24px 15px 20px 18px 22px 18px 20px 21px 24px 7px;
}
.acts .ok { color: #1bc57f; }
.acts .warnc { color: #ff8a5c; }
.a1 { width: 16px; height: 16px; }
.a2 { width: 9px; height: 17px; }
.a3 { width: 17px; height: 14px; }
.a4 { width: 15px; height: 18px; }
.a5 { width: 16px; height: 16px; }
.a6 { width: 12px; height: 15px; }
.a7 { width: 13px; height: 12px; }
.a8 { width: 16px; height: 13px; }
.a9 { width: 15px; height: 15px; }
.a0 { width: 6px; height: 16px; }

.scrollbar { width: 8px; flex: none; background: #f1f1f1; }
.thumb { height: 167px; background: #868686; }

/* downloads */
.downloads { height: 57px; flex: none; display: flex; align-items: center; padding-left: 4px; background: #fff; border-top: 1px solid #d0d0d0; }
.dl { width: 233px; height: 44px; flex: none; display: flex; align-items: center; padding: 0 17px 0 16px; border-right: 1px solid #c8c8c8; }
.pdf { width: 17px; height: 17px; }
.dl-name { margin-left: 12px; font-size: 12.300px; color: #4a4d52; }
.chev { width: 10px; height: 6px; margin-left: auto; }
.showall {
  width: 77px; height: 31px; margin-left: auto; margin-bottom: 3px; border: 1px solid #dadce0; border-radius: 4px; background: #fff;
  font: 12px "Open Sans", sans-serif; color: #1a73e8; padding: 0;
}
.dl-x { width: 10px; height: 10px; margin: 0 13px 0 14px; }

/* taskbar */
.taskbar { height: 40px; flex: none; display: flex; align-items: center; background: #3f3f3f; color: #fff; }
.win { width: 16px; height: 16px; margin-left: 16px; }
.tsearch {
  width: 344px; height: 40px; margin-left: 16px; flex: none; display: flex; align-items: center; padding-left: 12px;
  background: #f0f0f0; border: 1px solid #a8a8a8; border-bottom: 0; font-size: 14px; color: #222;
}
.lens { width: 16px; height: 16px; margin-right: 11px; }
.cortana { width: 16px; height: 16px; margin-left: 16px; }
.taskview { width: 18px; height: 14px; margin-left: 30px; }
.apps { display: flex; margin-left: 18px; height: 40px; }
.app { width: 49px; height: 40px; display: flex; align-items: center; justify-content: center; position: relative; padding-bottom: 2px; }
.app svg { width: 24px; height: 24px; }
.app svg.sticky { width: 18px; height: 18px; }
.app.on::after { content: ""; position: absolute; left: 5px; right: 4px; bottom: 0; height: 2px; background: #76b9ed; }
.app.active { background: linear-gradient(90deg, transparent 2px, #636363 2px, #636363 46px, transparent 46px); }
.app.active::after { left: 2px; right: 3px; }
.app-letter { font: 700 11px "Open Sans", sans-serif; fill: #fff; text-anchor: middle; }
.help-q { font: 700 16px "Open Sans", sans-serif; fill: #fff; text-anchor: middle; }
.m-letter { font: 700 17px "Open Sans", sans-serif; fill: #fff; text-anchor: middle; }
.tray { display: flex; align-items: center; margin-left: 15px; flex: 1; }
.tr-up { width: 12px; height: 7px; }
.tr-net { width: 16px; height: 14px; margin-left: 11px; }
.tr-vol { width: 16px; height: 13px; margin-left: 6px; }
.eng { margin-left: 10px; font-size: 12px; }
.clock { margin-left: 13px; width: 64px; display: flex; flex-direction: column; align-items: center; font-size: 12px; line-height: 19px; white-space: nowrap; }
.notif { width: 34px; height: 40px; margin-left: 10px; position: relative; display: flex; padding: 13px 0 0 5px; }
.notif svg { width: 16px; height: 13px; }
.badge {
  position: absolute; left: 10px; top: 18px; width: 20px; height: 16px; border: 1px solid #aaa; border-radius: 8px;
  background: #333; font-size: 11px; line-height: 14px; text-align: center; color: #fff;
}
```
